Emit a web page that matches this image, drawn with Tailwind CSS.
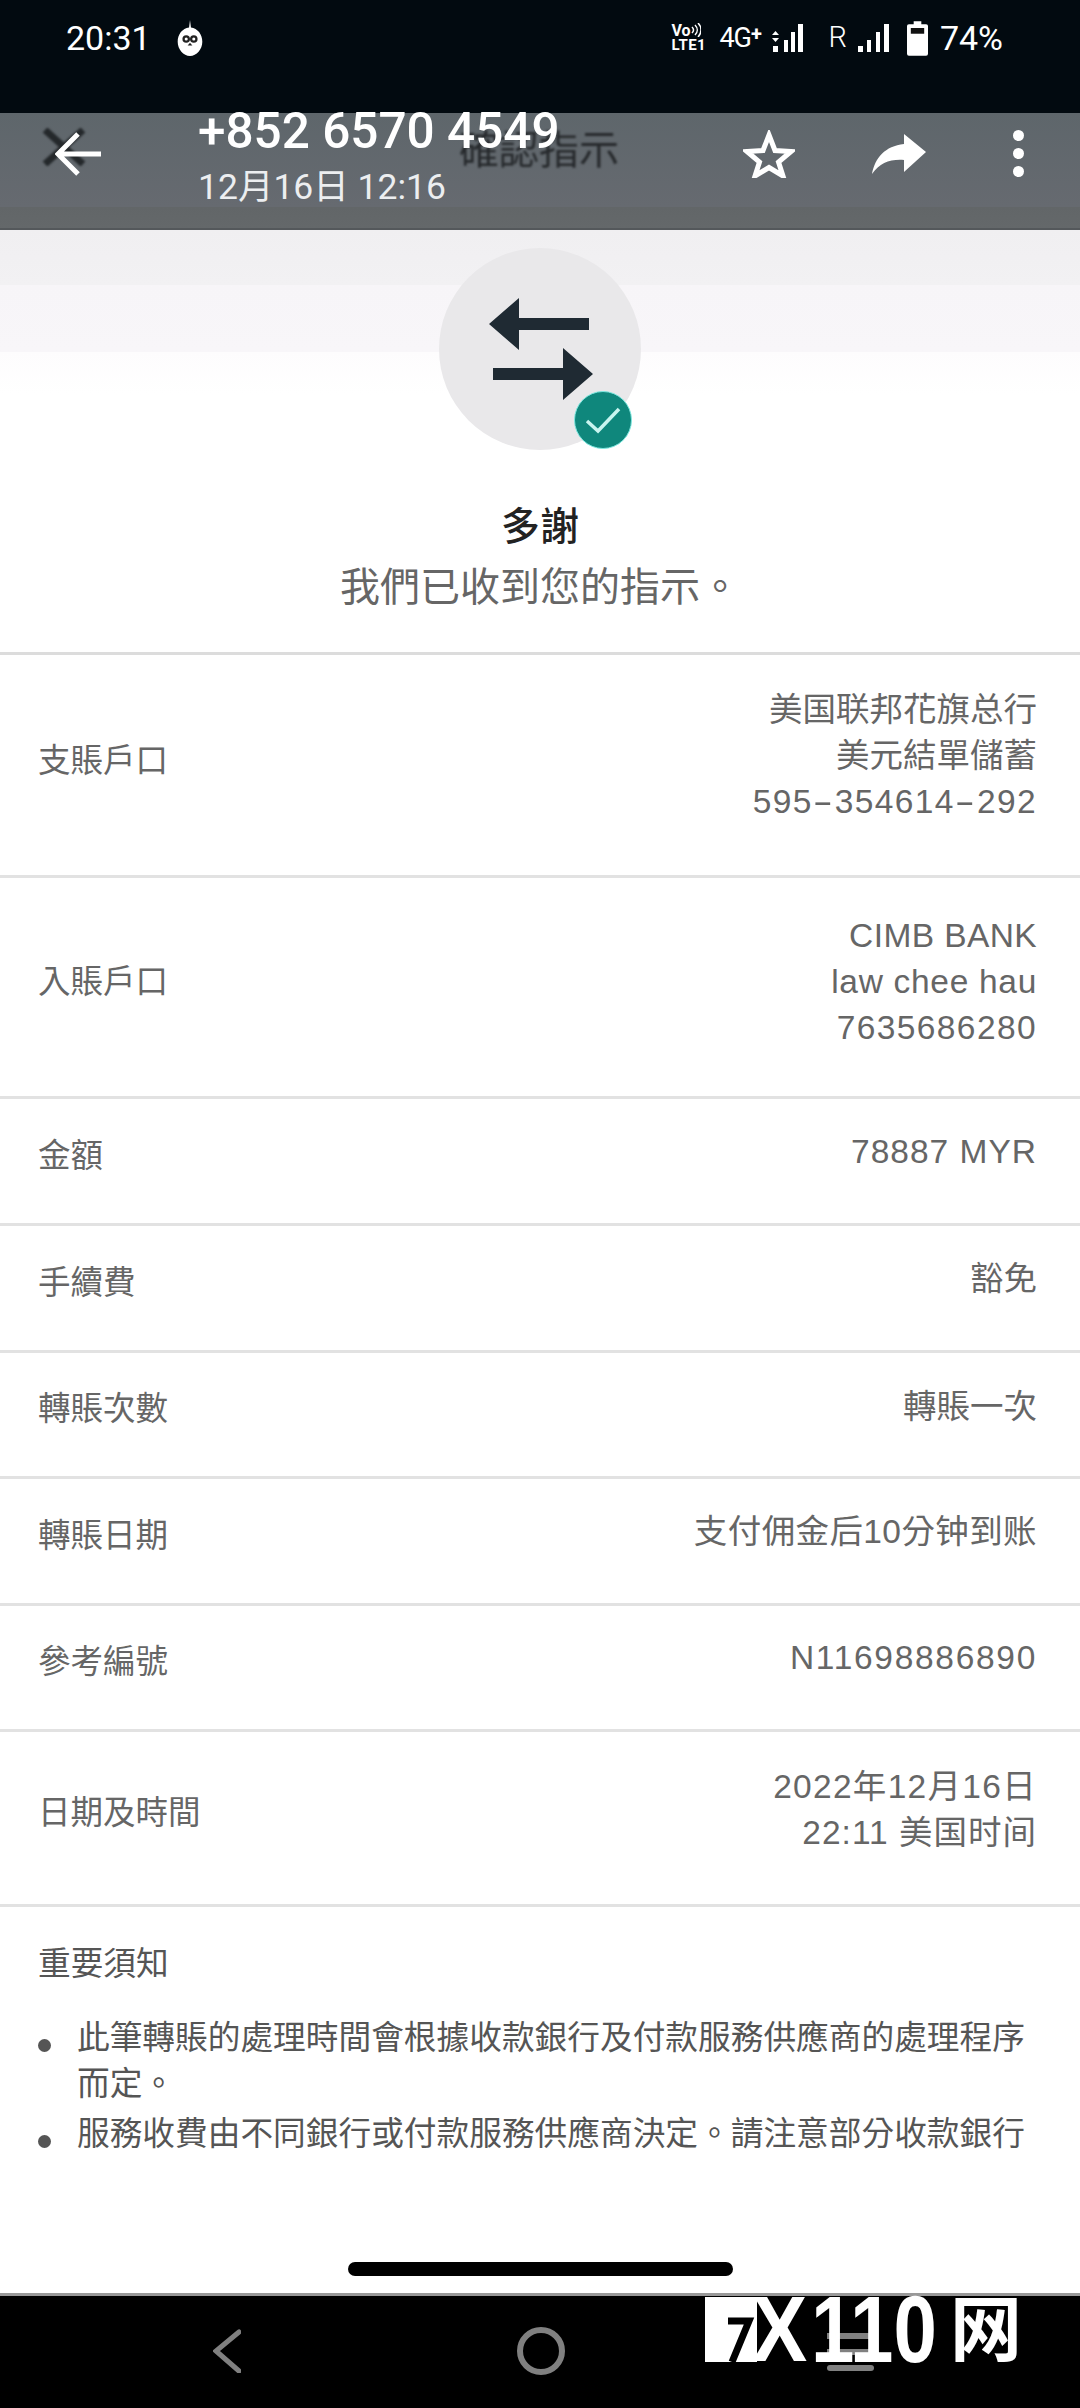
<!DOCTYPE html>
<html lang="en">
<head>
<meta charset="UTF-8">
<title>Transfer confirmation</title>
<script src="https://cdn.jsdelivr.net/npm/@tailwindcss/browser@4"></script>
</head>
<body class="bg-white">
<div class="relative w-[1080px] h-[2408px] overflow-hidden flex flex-col bg-white font-['Liberation_Sans','Noto_Sans_CJK_TC',sans-serif] text-[#666]">

  <!-- status bar -->
  <div class="h-[113px] shrink-0 bg-[#020a10] text-white flex items-start justify-between pl-[66px] pr-[77px] pt-[20px] font-['Roboto','Noto_Sans_CJK_TC',sans-serif]">
    <div class="flex items-center gap-[25px] h-[36px]">
      <span class="text-[34px] leading-none">20:31</span>
      <svg width="28" height="36" viewBox="0 0 28 38"><path d="M14 0l1 8c7 1 12 7 12 15 0 8-6 15-13 15S1 31 1 23C1 15 6 9 13 8z" fill="#fff"/><circle cx="10" cy="20" r="4" fill="#222"/><circle cx="18" cy="20" r="4" fill="#222"/><circle cx="10" cy="20" r="1.6" fill="#fff"/><circle cx="18" cy="20" r="1.6" fill="#fff"/><path d="M14 24l-2.500 3h5z" fill="#222"/></svg>
    </div>
    <div class="flex items-center h-[36px]">
      <div class="flex flex-col w-[36px] mr-[12px] font-bold">
        <div class="flex items-start h-[15px]"><span class="text-[16px] leading-[15px]">Vo</span><svg width="10" height="14" viewBox="0 0 10 14" fill="none" stroke="#fff" stroke-width="1.500"><path d="M1 4c2 2 2 4 0 6M4 2c3 3 3 7 0 10M7 0c4 4 4 10 0 14"/></svg></div>
        <span class="text-[15px] leading-[15px] tracking-[.5px]">LTE1</span>
      </div>
      <span class="text-[27px] mr-[10px] w-[43px] whitespace-nowrap tracking-[-1px]">4G<span class="text-[20px] align-[6px] font-bold">+</span></span>
      <svg width="31" height="28" viewBox="0 0 31 28" class="mr-[25px]" fill="#fff"><rect x="12" y="16" width="4" height="12"/><rect x="19" y="8" width="4" height="20"/><rect x="26" y="0" width="5" height="28"/><path d="M3.500 7l3.500 4H0zM3.500 18l3.500-4H0z"/><rect x="1" y="22" width="5" height="6"/></svg>
      <span class="text-[29px] mr-[11px] font-light">R</span>
      <svg width="31" height="28" viewBox="0 0 31 28" class="mr-[18px]" fill="#fff"><rect x="0" y="22" width="5" height="6"/><rect x="9" y="16" width="4" height="12"/><rect x="18" y="8" width="4" height="20"/><rect x="26" y="0" width="5" height="28"/></svg>
      <svg width="21" height="35" viewBox="0 0 22 36" class="mr-[12px]" fill="#fff"><path d="M7 0h8v3h5a2 2 0 0 1 2 2v29a2 2 0 0 1-2 2H2a2 2 0 0 1-2-2V5a2 2 0 0 1 2-2h5z"/><rect x="4" y="7" width="14" height="6" fill="#111"/></svg>
      <span class="text-[34px] leading-none">74%</span>
    </div>
  </div>

  <!-- message viewer toolbar over the app's own title -->
  <div class="relative h-[117px] shrink-0 bg-[linear-gradient(#5e666b,#666a70_82%,#626668_82%,#64686a)] border-b-2 border-[#54585b]">
    <svg class="absolute left-[42px] top-[15px] blur-[1px]" width="44" height="38" viewBox="0 0 44 38"><path d="M3 2l38 34M41 2L3 36" stroke="#24282b" stroke-width="7" fill="none"/></svg>
    <span class="absolute left-[459px] top-[13px] text-[40px] leading-[48px] text-[#26292c] blur-[1px]">確認指示</span>
    <div class="relative flex items-center h-[115px] pl-[55px] pr-[56px] pb-[34px]">
      <svg width="46" height="44" viewBox="0 0 46 44" fill="none" stroke="#fff" stroke-width="5"><path d="M46 22H4M23 2L3 22l20 20"/></svg>
      <div class="ml-[97px] flex-1 self-start -mt-[8px] text-white font-['Roboto','Noto_Sans_CJK_TC',sans-serif]">
        <div class="text-[49.500px] leading-[52px] font-medium whitespace-nowrap">+852 6570 4549</div>
        <div class="text-[35.500px] leading-[40px] mt-[10px] text-[#eceef0] whitespace-nowrap">12月16日 12:16</div>
      </div>
      <svg width="52" height="48" viewBox="0 0 52 48" class="mr-[76px]" fill="none" stroke="#fff" stroke-width="5"><path d="M26 5l6 15.500 16 1-12.500 10.500 4.500 14-14-8.500L12 46l4.500-14L4 21.500l16-1z"/></svg>
      <svg width="56" height="40" viewBox="0 0 56 40" class="mr-[86px]" fill="#fff"><path d="M33 0l22 18-22 20V26C19 25 9 29 1 40 4 24 14 12 33 10z"/></svg>
      <div class="flex flex-col gap-[7px]"><span class="w-[11px] h-[11px] rounded-full bg-white"></span><span class="w-[11px] h-[11px] rounded-full bg-white"></span><span class="w-[11px] h-[11px] rounded-full bg-white"></span></div>
    </div>
  </div>

  <!-- success header -->
  <div class="h-[425px] shrink-0 pt-[18px] flex flex-col items-center border-b-[3px] border-[#dcdcdc] bg-[linear-gradient(#f0eff1_0px,#f2f1f3_55px,#f7f5f8_55px,#f8f6f9_122px,#fdfcfd_122px,#fff_165px)]">
    <div class="relative w-[202px] h-[202px] rounded-full bg-[#e9e8ea] shrink-0">
      <svg class="absolute left-[48px] top-[48px]" width="108" height="108" viewBox="0 0 108 108" fill="#1f2a33"><path d="M2 28l30-26v20h70v12H32v20zM106 78L76 104V84H6V72h70V52z"/></svg>
      <div class="absolute left-[135px] top-[143px] w-[58px] h-[58px] rounded-full bg-[#0f877c] border border-[#7fe8e0] flex items-center justify-center">
        <svg width="38" height="30" viewBox="0 0 38 30" fill="none" stroke="#c8f5f0" stroke-width="3.500"><path d="M3 16l11 10L35 4"/></svg>
      </div>
    </div>
    <div class="mt-[52px] text-[39px] leading-[50px] text-[#222] font-medium">多謝</div>
    <div class="mt-[12px] text-[40px] leading-[46px] text-[#666] whitespace-nowrap">我們已收到您的指示。</div>
  </div>

  <!-- details -->
  <div class="h-[223px] shrink-0 flex items-center justify-between pl-[38px] pr-[43px] pb-[10px] border-b-[3px] border-[#e2e2e2] text-[32.500px]">
    <span class="mt-[3px]">支賬戶口</span>
    <div class="text-right text-[33.500px] leading-[46px] -mt-[9px]"><div>美国联邦花旗总行</div><div>美元結單儲蓄</div><div class="tracking-[1.400px]">595<span class="inline-block w-[22px] text-center scale-x-[1.800]">-</span>354614<span class="inline-block w-[22px] text-center scale-x-[1.800]">-</span>292</div></div>
  </div>
  <div class="h-[221px] shrink-0 flex items-center justify-between pl-[38px] pr-[43px] pb-[10px] border-b-[3px] border-[#e2e2e2] text-[32.500px]">
    <span>入賬戶口</span>
    <div class="text-right text-[33.500px] leading-[46px]"><div class="tracking-[.4px]">CIMB BANK</div><div class="tracking-[.7px]">law chee hau</div><div class="tracking-[1.400px]">7635686280</div></div>
  </div>
  <div class="h-[127px] shrink-0 flex items-center justify-between pl-[38px] pr-[43px] pb-[10px] border-b-[3px] border-[#e2e2e2] text-[32.500px]"><span>金額</span><span class="-mt-[8px] text-[33.500px] tracking-[1px]">78887 MYR</span></div>
  <div class="h-[127px] shrink-0 flex items-center justify-between pl-[38px] pr-[43px] pb-[10px] border-b-[3px] border-[#e2e2e2] text-[32.500px]"><span>手續費</span><span class="-mt-[8px] text-[33.500px]">豁免</span></div>
  <div class="h-[126px] shrink-0 flex items-center justify-between pl-[38px] pr-[43px] pb-[10px] border-b-[3px] border-[#e2e2e2] text-[32.500px]"><span>轉賬次數</span><span class="-mt-[5px] text-[33.500px]">轉賬一次</span></div>
  <div class="h-[127px] shrink-0 flex items-center justify-between pl-[38px] pr-[43px] pb-[10px] border-b-[3px] border-[#e2e2e2] text-[32.500px]"><span>轉賬日期</span><span class="-mt-[8px] text-[33.500px] tracking-[.4px]">支付佣金后10分钟到账</span></div>
  <div class="h-[126px] shrink-0 flex items-center justify-between pl-[38px] pr-[43px] pb-[10px] border-b-[3px] border-[#e2e2e2] text-[32.500px]"><span>參考編號</span><span class="-mt-[8px] text-[33.500px] tracking-[1.700px]">N11698886890</span></div>
  <div class="h-[175px] shrink-0 flex items-center justify-between pl-[38px] pr-[43px] pb-[10px] border-b-[3px] border-[#e2e2e2] text-[32.500px]">
    <span>日期及時間</span>
    <div class="text-right text-[33.500px] leading-[46px] -mt-[6px]"><div class="tracking-[1.300px]">2022年12月16日</div><div class="tracking-[1px]">22:11 美国时间</div></div>
  </div>

  <!-- notes -->
  <div class="flex-1 pl-[38px] pr-[43px] pt-[34px] text-[32.700px] text-[#555]">
    <div class="leading-[46px]">重要須知</div>
    <ul class="mt-[28px] leading-[46px]">
      <li class="flex"><span class="w-[13px] h-[13px] rounded-full bg-[#555] mt-[24px] mr-[26px] shrink-0"></span><span>此筆轉賬的處理時間會根據收款銀行及付款服務供應商的處理程序而定。</span></li>
      <li class="flex mt-[4px]"><span class="w-[13px] h-[13px] rounded-full bg-[#555] mt-[24px] mr-[26px] shrink-0"></span><span class="whitespace-nowrap">服務收費由不同銀行或付款服務供應商決定。請注意部分收款銀行</span></li>
    </ul>
  </div>
  <div class="h-[31px] shrink-0 flex justify-center"><div class="w-[385px] h-[14px] rounded-full bg-black"></div></div>

  <!-- android nav bar -->
  <div class="relative h-[115px] shrink-0 bg-black border-t-[3px] border-[#999]">
    <div class="h-full pt-[33px] pl-[213px] flex items-start">
      <svg width="28" height="44" viewBox="0 0 28 44" fill="none" stroke="#808080" stroke-width="5" stroke-linecap="round"><path d="M26 3L3 22l23 20"/></svg>
      <div class="ml-[276px] w-[48px] h-[48px] -mt-[2px] rounded-full border-[6px] border-[#808080]"></div>
      <div class="ml-[262px] w-[47px] flex flex-col gap-[10px] mt-[4px]"><span class="h-[6px] bg-[#808080]"></span><span class="h-[6px] bg-[#808080]"></span><span class="h-[6px] rounded-full bg-[#808080]"></span></div>
    </div>
    <!-- watermark -->
    <div class="absolute left-[705px] top-[1px] w-[320px] h-[65px] text-white font-bold font-['Liberation_Sans','Noto_Sans_CJK_SC',sans-serif]">
      <div class="absolute left-0 top-0 w-[52px] h-[65px] bg-white"></div>
      <span class="absolute left-0 top-[-10px] origin-left scale-x-90 text-[92px] leading-[85px] tracking-[-4px] whitespace-nowrap">FX</span>
      <svg class="absolute left-[22px] top-[19px]" width="30" height="46" viewBox="0 0 30 46" fill="none" stroke="#000" stroke-width="7"><path d="M1 5h21L5 46"/></svg>
      <span class="absolute left-[106px] top-[-10px] origin-left scale-x-[.83] text-[94px] leading-[85px] whitespace-nowrap">110</span>
      <span class="absolute left-[245px] top-[-3px] text-[72px] leading-[72px]">网</span>
    </div>
  </div>
</div>
</body>
</html>
